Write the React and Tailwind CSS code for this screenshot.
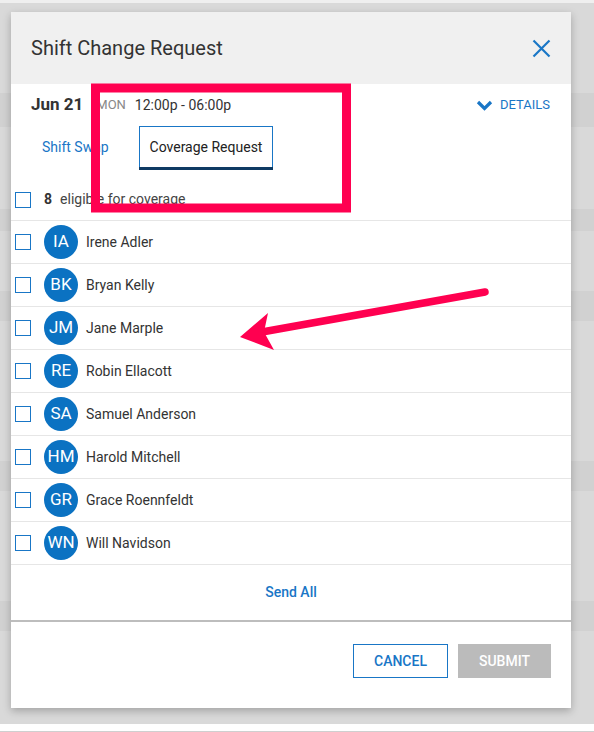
import React from 'react';

const people = [
    ['IA', 'Irene Adler'],
    ['BK', 'Bryan Kelly'],
    ['JM', 'Jane Marple'],
    ['RE', 'Robin Ellacott'],
    ['SA', 'Samuel Anderson'],
    ['HM', 'Harold Mitchell'],
    ['GR', 'Grace Roennfeldt'],
    ['WN', 'Will Navidson'],
];

function Box() {
    return <span className="block w-[16px] h-[16px] border-[1.5px] border-[#1976c6] bg-white shrink-0"></span>;
}

export default function App() {
    return (
        <div className="relative w-[594px] h-[732px] overflow-hidden bg-[#d9d9d9]" style={{ fontFamily: 'Roboto, "Liberation Sans", sans-serif' }}>
            {/* page behind the overlay */}
            <div className="flex flex-col h-full">
                <div className="h-[3px] bg-[#efefef]"></div>
                <div className="h-[90px]"></div>
                <div className="h-[34px] bg-[#d1d1d1]"></div>
                <div className="h-[82px]"></div>
                <div className="h-[22px] bg-[#d1d1d1]"></div>
                <div className="h-[60px]"></div>
                <div className="h-[30px] bg-[#d1d1d1]"></div>
                <div className="h-[140px]"></div>
                <div className="h-[30px] bg-[#d1d1d1]"></div>
                <div className="h-[110px]"></div>
                <div className="h-[30px] bg-[#d1d1d1]"></div>
                <div className="flex-1"></div>
                <div className="h-[8px] bg-white border-b border-[#cfcfcf]"></div>
            </div>

            {/* modal */}
            <div className="absolute left-[11px] top-[12px] w-[560px] h-[696px] bg-white shadow-[0_3px_8px_rgba(0,0,0,0.25)] flex flex-col">
                <header className="h-[72px] bg-[#f0f0f0] flex items-center justify-between pl-[20px] pr-[20px] shrink-0">
                    <h1 className="text-[20px] text-[#333]">Shift Change Request</h1>
                    <svg width="19" height="19" viewBox="0 0 19 19" className="mt-[1px]">
                        <path d="M1.5 1.5 L17.5 17.5 M17.5 1.5 L1.5 17.5" stroke="#1976c6" strokeWidth="2.2" fill="none" />
                    </svg>
                </header>

                <div className="h-[42px] flex items-center pl-[20px] pr-[21px] shrink-0">
                    <span className="text-[17px] font-bold text-[#333]">Jun 21</span>
                    <span className="ml-[13px] text-[13px] text-[#888]">MON</span>
                    <span className="ml-[9px] text-[14px] text-[#333]">12:00p - 06:00p</span>
                    <span className="ml-auto flex items-center gap-[7px] text-[13px] text-[#1976c6]">
                        <svg width="17" height="11" viewBox="0 0 17 11">
                            <path d="M2 2 L8.5 8.5 L15 2" stroke="#1976c6" strokeWidth="3.2" fill="none" />
                        </svg>
                        DETAILS
                    </span>
                </div>

                <div className="flex items-start pl-[20px] h-[45px] shrink-0">
                    <div className="w-[97px] h-[42px] flex items-center pl-[11px] text-[14px] text-[#1976c6]">Shift Swap</div>
                    <div className="ml-[11px] w-[134px] h-[45px] flex flex-col">
                        <div className="h-[42px] border border-[#1976c6] flex items-center justify-center text-[14px] text-[#222]">Coverage Request</div>
                        <div className="h-[3px] bg-[#0e3a63] -mt-[1px]"></div>
                    </div>
                </div>

                <div className="h-[50px] pt-[8px] flex items-center pl-[4px] border-b border-[#e6e6e6] shrink-0">
                    <Box />
                    <span className="ml-[13px] text-[14px] font-bold text-[#333]">8</span>
                    <span className="ml-[8px] text-[14px] text-[#444]">eligible for coverage</span>
                </div>

                {people.map(([ini, name]) => (
                    <div key={name} className="h-[43px] flex items-center pl-[4px] border-b border-[#e6e6e6] shrink-0">
                        <Box />
                        <span className="ml-[13px] w-[34px] h-[34px] rounded-full bg-[#0b72c2] text-white text-[17px] flex items-center justify-center">{ini}</span>
                        <span className="ml-[8px] text-[14px] text-[#333]">{name}</span>
                    </div>
                ))}

                <div className="h-[57px] flex items-center justify-center text-[14px] font-medium text-[#1976c6] border-b-2 border-[#bdbdbd] shrink-0">Send All</div>

                <div className="flex-1 flex justify-end items-start pt-[22px] pr-[20px] gap-[10px]">
                    <button className="w-[95px] h-[34px] border border-[#1976c6] text-[14px] font-medium text-[#1976c6]">CANCEL</button>
                    <button className="w-[93px] h-[34px] bg-[#bbbbbb] text-[14px] font-medium text-white">SUBMIT</button>
                </div>
            </div>

            {/* annotations */}
            <svg className="absolute inset-0 pointer-events-none" width="594" height="732">
                <rect x="95.5" y="88" width="251" height="120" stroke="#ff0050" strokeWidth="9" fill="none" />
                <line x1="485" y1="292" x2="262" y2="332" stroke="#ff0050" strokeWidth="7.5" strokeLinecap="round" />
                <polygon points="240,337 268,313 264,332 274,350" fill="#ff0050" />
            </svg>
        </div>
    );
}
